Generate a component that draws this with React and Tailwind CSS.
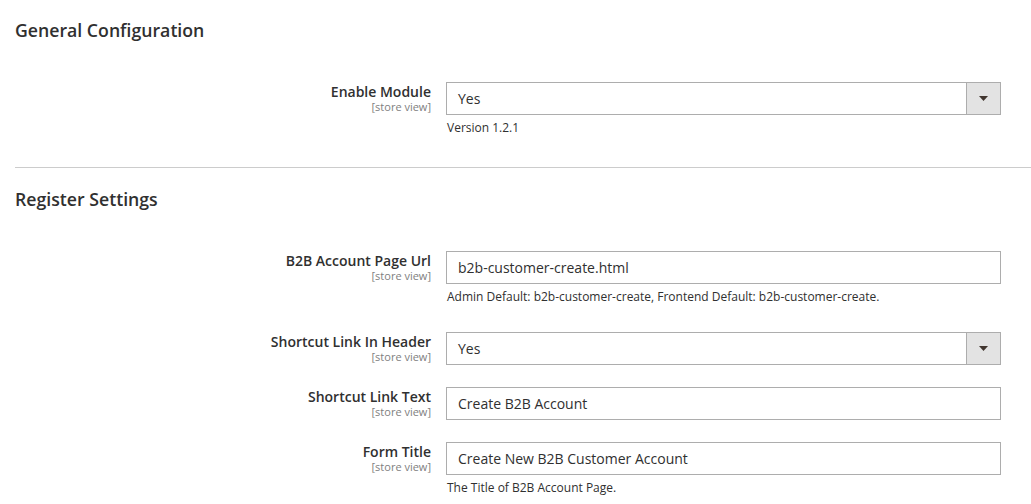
import React from "react";

const font = { fontFamily: '"Open Sans", "Liberation Sans", sans-serif' };

function Label({ text }) {
  return (
    <div className="w-[431px] shrink-0 text-right pt-[1px]">
      <div className="text-[14px] leading-[18px] font-semibold text-[#303030]">{text}</div>
      <div className="text-[11px] leading-[11px] text-[#808080]">[store view]</div>
    </div>
  );
}

function SelectBox({ value }) {
  return (
    <div className="flex h-[33px] w-[555px] border border-[#adadad] bg-white">
      <div className="flex-1 pl-[11px] flex items-center text-[14px] text-[#303030]">{value}</div>
      <div className="w-[34px] h-full bg-[#e3e3e3] border-l border-[#adadad] flex items-center justify-center">
        <svg width="9" height="5" viewBox="0 0 9 5">
          <polygon points="0,0 9,0 4.5,5" fill="#41362f" />
        </svg>
      </div>
    </div>
  );
}

function InputBox({ value }) {
  return (
    <div className="h-[33px] w-[555px] border border-[#adadad] bg-white pl-[11px] flex items-center text-[14px] text-[#303030]">
      {value}
    </div>
  );
}

function Row({ label, children, note, last }) {
  return (
    <div className={`flex ${last ? "" : "pb-[22px]"}`}>
      <Label text={label} />
      <div className="ml-[15px]">
        {children}
        {note && (
          <div className="mt-[4px] leading-[18px] pb-[4px] text-[12px] text-[#303030] pl-[1px]">{note}</div>
        )}
      </div>
    </div>
  );
}

export default function App() {
  return (
    <div className="w-[1031px] h-[504px] overflow-hidden bg-white" style={font}>
      <h2 className="pl-[15px] pt-[18px] text-[17.7px] leading-[24px] font-semibold text-[#303030]">
        General Configuration
      </h2>
      <div className="mt-[40px]">
        <Row label="Enable Module" note="Version 1.2.1" last>
          <SelectBox value="Yes" />
        </Row>
      </div>
      <div className="ml-[15px] mt-[26px] border-t border-[#cccccc]" />
      <h2 className="pl-[15px] mt-[19px] text-[17.7px] leading-[24px] font-semibold text-[#303030]">
        Register Settings
      </h2>
      <div className="mt-[40px]">
        <Row
          label="B2B Account Page Url"
          note="Admin Default: b2b-customer-create, Frontend Default: b2b-customer-create."
        >
          <InputBox value="b2b-customer-create.html" />
        </Row>
        <Row label="Shortcut Link In Header">
          <SelectBox value="Yes" />
        </Row>
        <Row label="Shortcut Link Text">
          <InputBox value="Create B2B Account" />
        </Row>
        <Row label="Form Title" note="The Title of B2B Account Page.">
          <InputBox value="Create New B2B Customer Account" />
        </Row>
      </div>
    </div>
  );
}
